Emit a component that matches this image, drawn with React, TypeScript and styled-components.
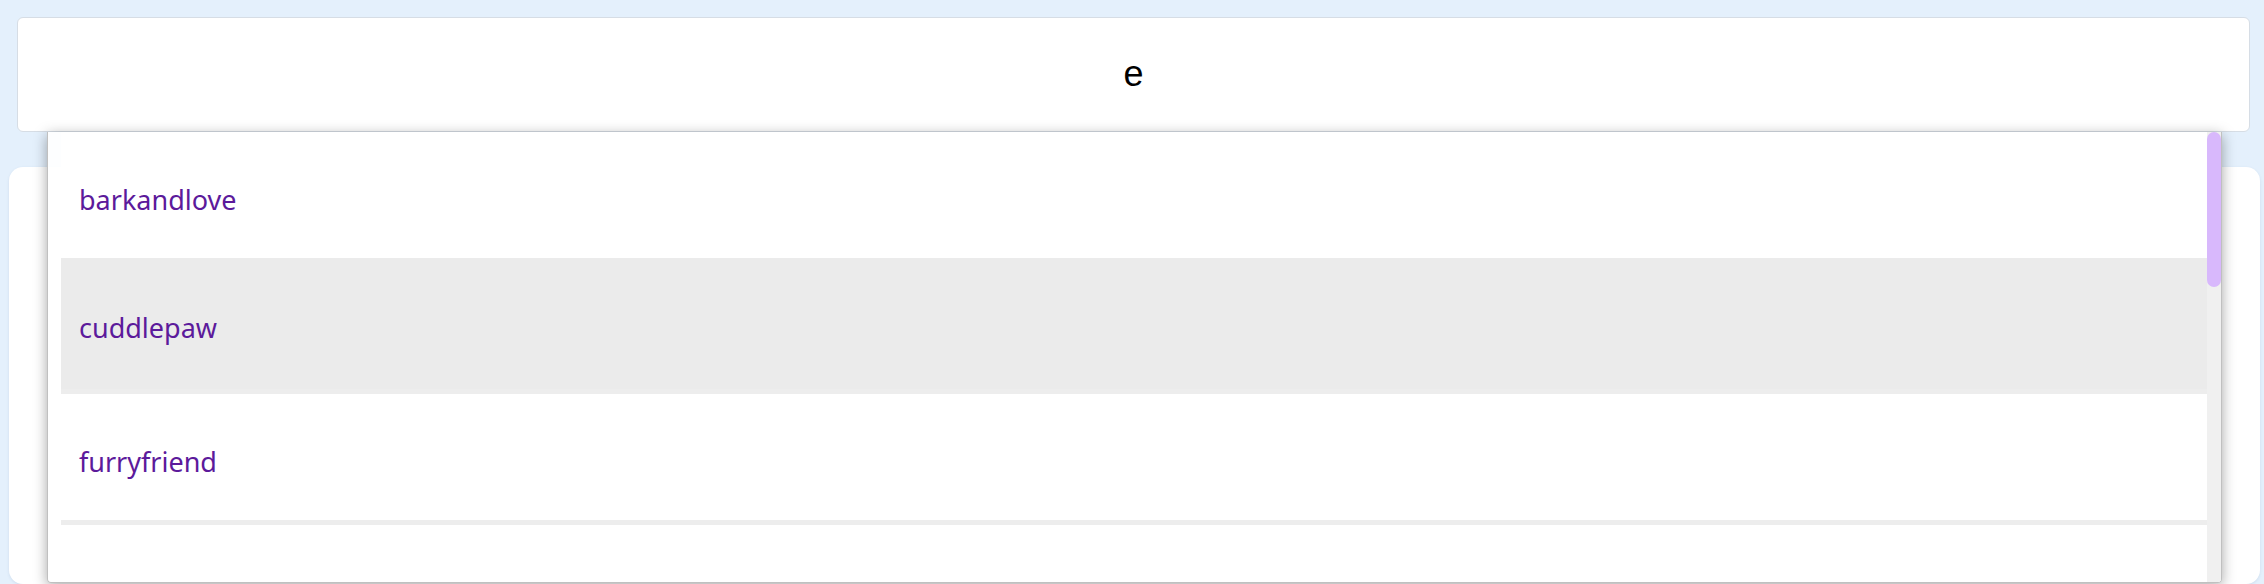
import React, { useEffect, useRef, useState } from 'react'
import styled, { createGlobalStyle } from 'styled-components'

const GlobalStyle = createGlobalStyle`
    html, body {
        margin: 0;
        padding: 0;
        background: #e4f0fc;
        font-family: 'Noto Sans', 'Open Sans', sans-serif;
    }
`

const Page = styled.div`
    height: 584px;
    overflow: hidden;
    box-sizing: border-box;
    padding: 17px 4px 0 9px;
    display: flex;
    flex-direction: column;
`

const SearchArea = styled.div`
    position: relative;
    margin: 0 10px 0 8px;
    z-index: 2;
`

const SearchInput = styled.input`
    display: block;
    width: 100%;
    height: 115px;
    box-sizing: border-box;
    border: 1px solid #d6dde5;
    border-radius: 6px;
    background: #fff;
    font-family: 'Liberation Sans', Arial, sans-serif;
    font-size: 36px;
    color: #000;
    text-align: center;
    outline: none;
    padding: 0 0 2px;
`

const Dropdown = styled.div`
    position: absolute;
    top: 100%;
    left: 30px;
    width: 2175px;
    height: 451px;
    box-sizing: border-box;
    padding-left: 13px;
    display: flex;
    background: rgba(255, 255, 255, 0.9);
    border: 1px solid #c0c0c0;
    border-top: none;
    border-radius: 0 0 4px 4px;
    box-shadow: 0 3px 14px rgba(0, 0, 0, 0.35);
    overflow: hidden;
`

const List = styled.ul`
    flex: 1;
    list-style: none;
    margin: 0;
    padding: 0;
    height: 100%;
    overflow-y: auto;
    scrollbar-width: none;

    &::-webkit-scrollbar {
        display: none;
    }
`

const ScrollTrack = styled.div`
    width: 14px;
    flex: none;
    background: #f0f0f0;
`

const ScrollThumb = styled.div`
    width: 14px;
    border-radius: 7px;
    background: #d8b8fc;
`

const Item = styled.li<{ $active?: boolean }>`
    display: flex;
    align-items: center;
    height: ${p => (p.$active ? '123px' : '118px')};
    box-sizing: content-box;
    padding: 8px 18px 0;
    margin: 0;
    background: ${p => (p.$active ? '#ebebeb' : '#fff')};
    border-bottom: 5px solid #ededed;
    font-size: 27px;
    color: #5c1a9b;
    white-space: nowrap;
    cursor: pointer;

    &:first-child {
        border-bottom: none;
    }
`

const Card = styled.div`
    margin-top: 35px;
    height: 600px;
    background: #fff;
    border-radius: 14px;
    box-shadow: 0 1px 3px rgba(60, 90, 130, 0.12);
`

const names = [
    'barkandlove',
    'cuddlepaw',
    'furryfriend',
    'happyfeet',
    'kittenlove',
    'lovemypet',
    'pawsandwhiskers',
    'snugglebear',
    'tailwagger',
    'wetnose',
]

export default function App() {
    const [query, setQuery] = useState('e')
    const [hovered, setHovered] = useState(1)
    const listRef = useRef<HTMLUListElement>(null)
    const [thumb, setThumb] = useState({ top: 0, height: 155 })

    const measure = () => {
        const el = listRef.current
        if (!el) return
        const ratio = el.clientHeight / el.scrollHeight
        setThumb({
            top: el.scrollTop * ratio,
            height: Math.max(30, el.clientHeight * ratio),
        })
    }

    useEffect(measure, [])

    return (
        <>
            <GlobalStyle />
            <Page>
                <SearchArea>
                    <SearchInput
                        value={query}
                        onChange={e => setQuery(e.target.value)}
                    />
                    <Dropdown>
                        <List ref={listRef} onScroll={measure}>
                            {names.map((name, i) => (
                                <Item
                                    key={name}
                                    $active={i === hovered}
                                    onMouseEnter={() => setHovered(i)}
                                >
                                    {name}
                                </Item>
                            ))}
                        </List>
                        <ScrollTrack>
                            <ScrollThumb
                                style={{
                                    marginTop: thumb.top,
                                    height: thumb.height,
                                }}
                            />
                        </ScrollTrack>
                    </Dropdown>
                </SearchArea>
                <Card />
            </Page>
        </>
    )
}
